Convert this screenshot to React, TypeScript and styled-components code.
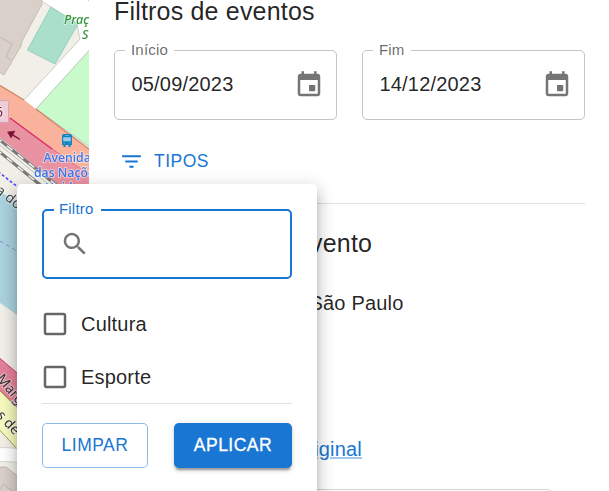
import React from "react";
import styled, { createGlobalStyle } from "styled-components";

const GlobalStyle = createGlobalStyle`
  * { box-sizing: border-box; }
  html, body { margin: 0; background: #fff; overflow: hidden; }
  body {
    font-family: "Liberation Sans", Arial, sans-serif;
    font-size: 20px;
    line-height: 30px;
    letter-spacing: 0.00938em;
    color: rgba(0, 0, 0, 0.87);
  }
`;

const Page = styled.div`
  position: relative;
  display: flex;
  width: 609px;
  height: 491px;
  overflow: hidden;
`;

const MapPane = styled.svg`
  flex: 0 0 89px;
  height: 491px;
  display: block;
`;

const Panel = styled.main`
  flex: 1;
  height: 491px;
  overflow: hidden;
  padding: 0 24px 0 25px;
  display: flex;
  flex-direction: column;
`;

const Heading = styled.h6<{ $top: number; $indent?: number }>`
  flex: none;
  margin: ${(p) => p.$top}px 0 0 ${(p) => p.$indent ?? 0}px;
  font-size: 25px;
  line-height: 40px;
  font-weight: 400;
  letter-spacing: 0.0075em;
`;

const FieldRow = styled.div`
  flex: none;
  display: grid;
  grid-template-columns: 1fr 1fr;
  gap: 25px;
  margin-top: 19px;
`;

const Field = styled.div<{ $focused?: boolean }>`
  position: relative;
  display: flex;
  align-items: center;
  justify-content: ${(p) => (p.$focused ? "flex-start" : "space-between")};
  height: 70px;
  padding: ${(p) => (p.$focused ? "0 16px" : "0 12px 0 16.5px")};
  border: ${(p) => (p.$focused ? "2px solid #1976d2" : "1px solid #c4c4c4")};
  border-radius: 5px;
`;

const FieldValue = styled.span`
  padding-bottom: 2px;
`;

const FieldLabel = styled.label<{ $focused?: boolean; $width: number }>`
  position: absolute;
  top: ${(p) => (p.$focused ? -11 : -10)}px;
  left: 10px;
  width: ${(p) => p.$width}px;
  padding-left: ${(p) => (p.$focused ? 5 : 6)}px;
  background: #fff;
  font-size: 15px;
  line-height: 18px;
  color: ${(p) => (p.$focused ? "#1976d2" : "rgba(0, 0, 0, 0.6)")};
`;

const Icon = styled.svg<{ $size?: number }>`
  flex: none;
  width: ${(p) => p.$size ?? 30}px;
  height: ${(p) => p.$size ?? 30}px;
  fill: currentColor;
`;

const IconTint = styled.span`
  display: flex;
  color: rgba(0, 0, 0, 0.54);
`;

const TypesButton = styled.button`
  flex: none;
  align-self: flex-start;
  display: flex;
  align-items: center;
  gap: 10px;
  height: 46px;
  margin-top: 18px;
  padding: 0 10px 0 5px;
  border: 0;
  background: none;
  font: inherit;
  font-size: 17.5px;
  letter-spacing: 0.02857em;
  color: #1976d2;
`;

const Divider = styled.hr<{ $top: number }>`
  flex: none;
  width: 100%;
  height: 1px;
  margin: ${(p) => p.$top}px 0 0;
  border: 0;
  background: #e0e0e0;
`;

const Detail = styled.p<{ $top: number; $indent: number }>`
  flex: none;
  margin: ${(p) => p.$top}px 0 0 ${(p) => p.$indent}px;
`;

const Link = styled.a`
  color: #1976d2;
  text-decoration: underline;
  text-decoration-color: rgba(25, 118, 210, 0.4);
`;

const EventCard = styled.section`
  flex: none;
  width: 438px;
  height: 60px;
  margin-top: 25px;
  border: 1px solid #d6d6d6;
  border-radius: 4px;
`;

const Popover = styled.aside`
  position: absolute;
  left: 17px;
  top: 184px;
  width: 300px;
  height: 340px;
  padding: 25px;
  display: flex;
  flex-direction: column;
  background: #fff;
  border-radius: 5px;
  box-shadow: 0 6.25px 6.25px -3.75px rgba(0, 0, 0, 0.2),
    0 10px 12.5px 1.25px rgba(0, 0, 0, 0.14),
    0 3.75px 17.5px 2.5px rgba(0, 0, 0, 0.12);
`;

const Options = styled.div`
  display: flex;
  flex-direction: column;
  margin-top: 18px;
`;

const Option = styled.label`
  display: flex;
  align-items: center;
  gap: 11px;
  height: 53px;
  margin-left: -2px;
`;

const CheckTint = styled.span`
  display: flex;
  color: rgba(0, 0, 0, 0.6);
`;

const Actions = styled.div`
  display: flex;
  justify-content: space-between;
  margin-top: 19px;
`;

const ActionButton = styled.button<{ $primary?: boolean }>`
  width: ${(p) => (p.$primary ? 118 : 106)}px;
  height: 45px;
  padding: 0 0 1px;
  border: ${(p) => (p.$primary ? "0" : "1px solid rgba(25, 118, 210, 0.5)")};
  border-radius: 5px;
  font: inherit;
  font-size: 17.5px;
  letter-spacing: 0.02857em;
  color: ${(p) => (p.$primary ? "#fff" : "#1976d2")};
  -webkit-text-stroke: ${(p) => (p.$primary ? "0.3px #fff" : "0")};
  background: ${(p) => (p.$primary ? "#1976d2" : "#fff")};
  box-shadow: ${(p) =>
    p.$primary
      ? "0 3.75px 1.25px -2.5px rgba(0,0,0,.2), 0 2.5px 2.5px rgba(0,0,0,.14), 0 1.25px 6.25px rgba(0,0,0,.12)"
      : "none"};
`;

const MapArtwork = styled.g`
  filter: blur(0.4px);
`;

const MapText = styled.text`
  font-family: "Noto Sans", sans-serif;
  letter-spacing: 0;
  paint-order: stroke;
  stroke: rgba(255, 255, 255, 0.5);
  stroke-width: 2px;
  stroke-linejoin: round;
`;

const CalendarIcon = () => (
  <IconTint>
    <Icon viewBox="0 0 24 24">
      <path d="M17 12h-5v5h5v-5zM16 1v2H8V1H6v2H5c-1.11 0-1.99.9-1.99 2L3 19c0 1.1.89 2 2 2h14c1.1 0 2-.9 2-2V5c0-1.1-.9-2-2-2h-1V1h-2zm3 18H5V8h14v11z" />
    </Icon>
  </IconTint>
);

const DateField = ({ label, value, notch }: { label: string; value: string; notch: number }) => (
  <Field>
    <FieldLabel $width={notch}>{label}</FieldLabel>
    <FieldValue>{value}</FieldValue>
    <CalendarIcon />
  </Field>
);

const CheckOption = ({ label }: { label: string }) => (
  <Option>
    <CheckTint>
      <Icon viewBox="0 0 24 24">
        <path d="M19 5v14H5V5h14m0-2H5c-1.1 0-2 .9-2 2v14c0 1.1.9 2 2 2h14c1.1 0 2-.9 2-2V5c0-1.1-.9-2-2-2z" />
      </Icon>
    </CheckTint>
    {label}
  </Option>
);

const StreetMap = () => (
  <MapPane viewBox="0 0 89 491" width="89" height="491">
    <rect width="89" height="491" fill="#f2efe9" />
    <MapArtwork>
      {/* blocks and side streets */}
      <path d="M42 -4H94V52L36 109L24 100L80 40L77 25L43 2Z" fill="#fff" />
      <path d="M42 1L77 25L80 39L24 100" fill="none" stroke="#cfcbc7" />
      <path d="M87 -2L91 6V-2Z" fill="#c8c4c2" />
      <path d="M-4 -4H41L42 4L22 41L21 46L4 75L-4 70Z" fill="#d9d0c9" stroke="#c8bbb1" />
      <path d="M0 37L12 44L6 57L11 60" fill="none" stroke="#c4b6ab" />
      <path d="M51 7L78 24L55 64L27.500 50Z" fill="#aae0cb" stroke="#92cfb8" />
      <path d="M94 45L36 109L94 150Z" fill="#c8facc" stroke="#b9c9b5" />
      {/* trunk road and motorway */}
      <path d="M-4 83L24 100L36 109L94 153V180L10 118L-4 109Z" fill="#f9b29c" />
      <path d="M-4 83L24 100M36 109L94 153" fill="none" stroke="#cf8560" strokeWidth="1.2" />
      <path d="M-4 109L10 118L94 178V194H68L-4 134Z" fill="#e892a2" />
      <path d="M10 118L52 149" fill="none" stroke="#dc2a67" strokeWidth="1.4" />
      <path d="M52 149L94 178" fill="none" stroke="#e4718a" strokeWidth="1" />
      <path d="M-4 134L68 190" fill="none" stroke="#d99aa6" strokeWidth="1" />
      {/* railway */}
      <path d="M-4 137L60 188M-4 149L44 188" fill="none" stroke="#777" strokeWidth="3" />
      <path d="M-4 137L60 188M-4 149L44 188" fill="none" stroke="#f4f4f4" strokeWidth="1.5" strokeDasharray="7 7" />
      <path d="M-4 142L52 187" fill="none" stroke="#b5b3b0" strokeWidth="0.8" />
      <path d="M-2 171.500L19 188" fill="none" stroke="#4b4bff" strokeWidth="1.6" strokeDasharray="3 2" />
      <rect x="-10" y="100.500" width="18.500" height="22" rx="2" fill="#efcdd8" stroke="#d9a3b3" />
      <path d="M20 139L13 134.500L15 131L7.500 132L11 138L12.500 135.500L19.500 139.500Z" fill="#7b1035" stroke="#7b1035" strokeWidth="0.5" />
      {/* bus stop */}
      <path d="M64 134H70Q72 134 72 136V145H70.500V147H68.500V145H65.500V147H63.500V145H62V136Q62 134 64 134Z" fill="#0d83c4" />
      <path d="M65 135.500H69M63.500 137.500H70.500V141H63.500ZM63.500 143H65M69 143H70.500" fill="#9cc9e4" stroke="#9cc9e4" strokeWidth="0.6" />
      {/* river bank */}
      <path d="M-4 188L30 213V324L-4 300Z" fill="#aad3df" />
      <path d="M0 241L20 253" fill="none" stroke="#8f8fc0" strokeDasharray="4 3" />
      {/* marginal road and avenue */}
      <path d="M-4 355L30 384V420L-4 387Z" fill="#e4809a" stroke="#cb3c69" />
      <path d="M-4 387L30 420V463L-4 426Z" fill="#f6f9bd" stroke="#9da34a" />
      <path d="M-4 448Q13 446 30 452V466Q15 460 -4 462Z" fill="#fff" stroke="#d8d4d0" />
      <path d="M-4 467H6L30 486V495H-4Z" fill="#d9d0c9" stroke="#c4b6ab" />
      <path d="M0 490L3 484L13 491" fill="none" stroke="#c4b6ab" />
      {/* labels */}
      <MapText x="-5" y="117" fontSize="14" fill="#6b1d3b">6</MapText>
      <MapText x="64" y="24" fontSize="12.500" fontStyle="italic" fontWeight="500" fill="#2f9437">Praça</MapText>
      <MapText x="82" y="39" fontSize="12.500" fontStyle="italic" fontWeight="500" fill="#2f9437">S</MapText>
      <MapText x="43.500" y="161.500" fontSize="12.300" fontWeight="500" fill="#3278f0">Avenida</MapText>
      <MapText x="34" y="176.500" fontSize="12.300" fontWeight="500" fill="#3278f0">das Nações</MapText>
      <MapText x="45" y="191.500" fontSize="12.300" fontWeight="500" fill="#3278f0">Unidas</MapText>
      <MapText fontSize="14" fill="#494949" transform="translate(-5 192) rotate(38)">a do</MapText>
      <MapText fontSize="14" fill="#333" transform="translate(-4 379) rotate(50)">Marg</MapText>
      <MapText fontSize="14" fill="#333" transform="translate(-4 416) rotate(47)">s de C</MapText>
    </MapArtwork>
  </MapPane>
);

export default function App() {
  return (
    <>
      <GlobalStyle />
      <Page>
        <StreetMap />
        <Panel>
          <Heading $top={-9}>Filtros de eventos</Heading>
          <FieldRow>
            <DateField label="Início" value="05/09/2023" notch={49} />
            <DateField label="Fim" value="14/12/2023" notch={38} />
          </FieldRow>
          <TypesButton>
            <Icon $size={25} viewBox="0 0 24 24">
              <path d="M10 18h4v-2h-4v2zM3 6v2h18V6H3zm3 7h12v-2H6v2z" />
            </Icon>
            TIPOS
          </TypesButton>
          <Divider $top={19} />
          <Heading $top={19} $indent={182}>evento</Heading>
          <Detail $top={25} $indent={195.5}>São Paulo</Detail>
          <Detail $top={116} $indent={182}>
            <Link>original</Link>
          </Detail>
          <EventCard />
        </Panel>
        <Popover>
          <Field $focused>
            <FieldLabel $focused $width={47}>Filtro</FieldLabel>
            <IconTint>
              <Icon viewBox="0 0 24 24">
                <path d="M15.500 14h-.79l-.28-.27C15.410 12.590 16 11.110 16 9.500 16 5.910 13.090 3 9.500 3S3 5.910 3 9.500 5.910 16 9.500 16c1.610 0 3.090-.59 4.230-1.570l.27.28v.79l5 4.990L20.490 19l-4.990-5zm-6 0C7.010 14 5 11.990 5 9.500S7.010 5 9.500 5 14 7.010 14 9.500 11.990 14 9.500 14z" />
              </Icon>
            </IconTint>
          </Field>
          <Options>
            <CheckOption label="Cultura" />
            <CheckOption label="Esporte" />
          </Options>
          <Divider $top={0} />
          <Actions>
            <ActionButton>LIMPAR</ActionButton>
            <ActionButton $primary>APLICAR</ActionButton>
          </Actions>
        </Popover>
      </Page>
    </>
  );
}
